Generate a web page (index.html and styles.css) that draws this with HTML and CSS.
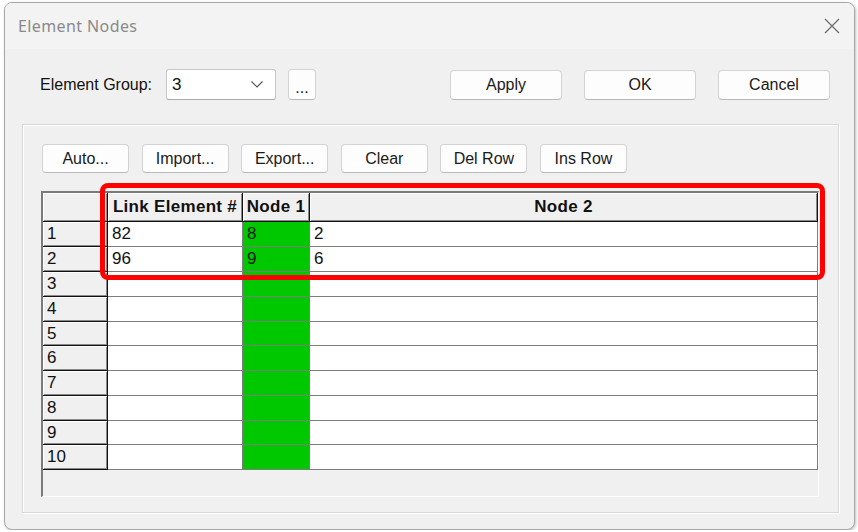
FILE: index.html
```html
<!DOCTYPE html>
<html lang="en">

<head>
    <meta charset="UTF-8">
    <title>Element Nodes</title>
    <link rel="stylesheet" href="styles.css">
</head>

<body>
    <div class="window">
        <div class="titlebar">
            <span class="title">Element Nodes</span>
            <svg class="close" width="16" height="16" viewBox="0 0 16 16">
                <path d="M1 1 L15 15 M15 1 L1 15" stroke="#6a6a6a" stroke-width="1.2" fill="none" />
            </svg>
        </div>

        <div class="content">
            <div class="top-row">
                <label class="group-label">Element Group:</label>
                <div class="combo">
                    <span>3</span>
                    <svg width="12" height="7" viewBox="0 0 12 7">
                        <path d="M0.5 0.5 L6 6 L11.5 0.5" stroke="#555" stroke-width="1.1" fill="none" />
                    </svg>
                </div>
                <button class="btn btn-dots">...</button>
                <div class="dialog-btns">
                    <button class="btn btn-wide">Apply</button>
                    <button class="btn btn-wide">OK</button>
                    <button class="btn btn-wide">Cancel</button>
                </div>
            </div>

            <div class="groupbox">
                <div class="toolbar">
                    <button class="btn btn-tool">Auto...</button>
                    <button class="btn btn-tool">Import...</button>
                    <button class="btn btn-tool">Export...</button>
                    <button class="btn btn-tool">Clear</button>
                    <button class="btn btn-tool">Del Row</button>
                    <button class="btn btn-tool">Ins Row</button>
                </div>

                <div class="grid">
                    <div class="sheet">
                        <div class="hd corner"></div>
                        <div class="hd">Link Element #</div>
                        <div class="hd">Node 1</div>
                        <div class="hd">Node 2</div>

                        <div class="rh">1</div><div class="cell">82</div><div class="cell green">8</div><div class="cell">2</div>
                        <div class="rh">2</div><div class="cell">96</div><div class="cell green">9</div><div class="cell">6</div>
                        <div class="rh">3</div><div class="cell"></div><div class="cell green"></div><div class="cell"></div>
                        <div class="rh">4</div><div class="cell"></div><div class="cell green"></div><div class="cell"></div>
                        <div class="rh">5</div><div class="cell"></div><div class="cell green"></div><div class="cell"></div>
                        <div class="rh">6</div><div class="cell"></div><div class="cell green"></div><div class="cell"></div>
                        <div class="rh">7</div><div class="cell"></div><div class="cell green"></div><div class="cell"></div>
                        <div class="rh">8</div><div class="cell"></div><div class="cell green"></div><div class="cell"></div>
                        <div class="rh">9</div><div class="cell"></div><div class="cell green"></div><div class="cell"></div>
                        <div class="rh">10</div><div class="cell"></div><div class="cell green"></div><div class="cell"></div>
                    </div>
                    <div class="highlight"></div>
                </div>
            </div>
        </div>
    </div>
</body>

</html>
```

FILE: styles.css
```css
body {
    margin: 0;
    background-color: #fff;
    font-family: "Liberation Sans", Arial, sans-serif;
    color: #111;
}

.window {
    margin: 2px 0 0 4px;
    width: 851px;
    height: 528px;
    box-sizing: border-box;
    border: 1px solid #a8a8a8;
    border-radius: 8px;
    background-color: #f0f0f0;
    box-shadow: 1px 1px 3px rgba(0, 0, 0, 0.25);
    overflow: hidden;
}

.titlebar {
    height: 46px;
    background-color: #f3f3f3;
    display: flex;
    align-items: center;
    justify-content: space-between;
    padding: 0 14px 0 13px;
}

.title {
    font-family: "Noto Sans", sans-serif;
    font-size: 16px;
    color: #8a8a8a;
    letter-spacing: 0.4px;
}

.content {
    padding: 20px 15px 0 17px;
}

.top-row {
    display: flex;
    align-items: center;
    height: 31px;
    padding-left: 18px;
    padding-right: 9px;
}

.group-label {
    width: 126px;
    font-size: 16px;
}

.combo {
    width: 110px;
    height: 31px;
    box-sizing: border-box;
    background-color: #fff;
    border: 1px solid #c6c6c6;
    border-bottom-color: #a8a8a8;
    border-radius: 3px;
    display: flex;
    align-items: center;
    justify-content: space-between;
    padding: 0 12px 0 5px;
    font-size: 17px;
    margin-right: 12px;
}

.btn {
    font-family: "Liberation Sans", Arial, sans-serif;
    font-size: 16px;
    color: #1a1a1a;
    background-color: #fdfdfd;
    border: 1px solid #d3d3d3;
    border-bottom-color: #b9b9b9;
    border-radius: 4px;
    padding: 0;
    box-sizing: border-box;
}

.btn-dots {
    width: 28px;
    height: 31px;
    padding-top: 6px;
}

.dialog-btns {
    margin-left: auto;
    display: flex;
    gap: 22px;
}

.btn-wide {
    width: 112px;
    height: 30px;
}

.groupbox {
    margin-top: 24px;
    height: 389px;
    box-sizing: border-box;
    border: 1px solid #d8d8d8;
    box-shadow: inset 1px 1px 0 #fff, 1px 1px 0 #fff;
    padding: 19px 19px 16px 18px;
}

.toolbar {
    display: flex;
    gap: 12.6px;
    margin-left: 1px;
}

.btn-tool {
    width: 87px;
    height: 29px;
}

.grid {
    position: relative;
    margin-top: 18px;
    height: 306px;
    box-sizing: border-box;
    background-color: #f0f0f0;
    border-top: 2px solid #7a7a7a;
    border-left: 2px solid #7a7a7a;
    border-right: 1px solid #fff;
    border-bottom: 1px solid #fff;
}

.sheet {
    display: grid;
    grid-template-columns: 65px 135px 67px 508px;
    grid-template-rows: 29px 25px 25px 25px 25px 24px 25px 25px 25px 24px 25px;
}

.sheet > div {
    box-sizing: border-box;
    display: flex;
    align-items: center;
    font-size: 17px;
    white-space: nowrap;
    overflow: hidden;
}

.hd {
    justify-content: center;
    font-weight: bold;
    letter-spacing: 0.3px;
    background-color: #f0f0f0;
    border-right: 1px solid #111;
    border-bottom: 1px solid #111;
    box-shadow: inset 1px 1px 0 #fff, inset -1px -1px 0 #8a8a8a;
}

.rh {
    padding-left: 4px;
    background-color: #f0f0f0;
    border-right: 1px solid #111;
    border-bottom: 1px solid #111;
    box-shadow: inset 1px 1px 0 #fff, inset -1px -1px 0 #8a8a8a;
}

.cell {
    padding-left: 4px;
    background-color: #fff;
    border-right: 1px solid #7d7d7d;
    border-bottom: 1px solid #7d7d7d;
}

.cell.green {
    background-color: #00c800;
    color: #0a1a0a;
}

.highlight {
    position: absolute;
    left: 57px;
    top: -10px;
    width: 725px;
    height: 97px;
    box-sizing: border-box;
    border: 5px solid #ff0000;
    border-radius: 8px;
}
```
